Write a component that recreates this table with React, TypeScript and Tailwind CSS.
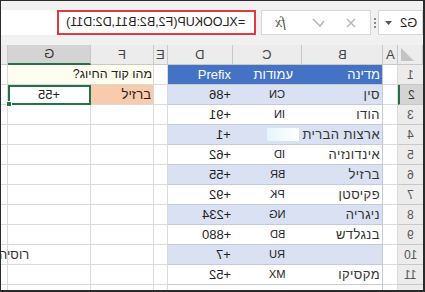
import type { ReactNode } from 'react'

// mirrored latin text (the screenshot is a flipped Excel sheet)
function M({ children, className = '' }: { children: ReactNode; className?: string }) {
  return <span className={`inline-block -scale-x-100 whitespace-nowrap ${className}`}>{children}</span>
}

const ROWS = [
  { n: '1', b: 'מדינה', c: 'עמודות', d: 'Prefix', head: true },
  { n: '2', b: 'סין', c: 'CN', d: '+86' },
  { n: '3', b: 'הודו', c: 'IN', d: '+91' },
  { n: '4', b: 'ארצות הברית', c: '', d: '+1' },
  { n: '5', b: 'אינדונזיה', c: 'ID', d: '+62' },
  { n: '6', b: 'ברזיל', c: 'BR', d: '+55' },
  { n: '7', b: 'פקיסטן', c: 'PK', d: '+92' },
  { n: '8', b: 'ניגריה', c: 'NG', d: '+234' },
  { n: '9', b: 'בנגלדש', c: 'BD', d: '+880' },
  { n: '10', b: '', c: 'RU', d: '+7' },
  { n: '11', b: 'מקסיקו', c: 'MX', d: '+52' },
]

const grid = 'border-r border-b border-[#dadada]'

function HeaderRow() {
  const cell = 'h-[20px] flex items-center justify-center border-r border-b border-[#c8c8c8] bg-[#ececec] text-[#444] text-[13px]'
  return (
    <div className="flex">
      <div className={`w-[7px] ${cell}`} />
      <div className={`w-[83px] h-[20px] flex items-center justify-center border-r border-[#c8c8c8] border-b-2 border-b-[#217346] bg-[#d4d4d4] text-[#333] text-[13px]`}>
        <M>G</M>
      </div>
      <div className={`w-[63px] ${cell}`}><M>F</M></div>
      <div className={`w-[14px] ${cell}`}><M>E</M></div>
      <div className={`w-[65px] ${cell}`}><M>D</M></div>
      <div className={`w-[69px] ${cell}`}><M>C</M></div>
      <div className={`w-[81px] ${cell}`}><M>B</M></div>
      <div className={`w-[15px] ${cell}`}><M>A</M></div>
      <div className={`w-[25px] ${cell} items-end justify-start pl-[3px] pb-[3px]`}>
        <svg width="13" height="13" viewBox="0 0 13 13">
          <polygon points="0,0 0,13 13,13" fill="#c3c3c3" />
        </svg>
      </div>
    </div>
  )
}

function DataRow({ r, i }: { r: (typeof ROWS)[number]; i: number }) {
  const band = r.head ? 'bg-[#4472c4] text-white' : i % 2 === 1 ? 'bg-[#d9e1f2] text-[#222]' : 'bg-white text-[#222]'
  const tcell = `h-[20px] flex items-center border-b border-[#c4cad6] ${band}`
  const sel = r.n === '2'
  return (
    <div className="flex text-[13px]">
      <div className={`w-[7px] h-[20px] ${grid}`} />

      {/* G */}
      {r.n === '1' ? (
        <div className="w-[83px] h-[20px] border-b border-[#dadada] bg-[#fffdf0]" />
      ) : sel ? (
        <div className="relative w-[83px] h-[20px] border-2 border-[#217346] flex items-center justify-center text-[#222]">
          <M>+55</M>
          <span className="absolute -left-[4px] -bottom-[4px] w-[6px] h-[6px] bg-[#217346] border border-white" />
        </div>
      ) : r.n === '10' ? (
        <div className={`w-[83px] h-[20px] ${grid} flex items-center`}>
          <span dir="rtl" className="-ml-[9px] whitespace-nowrap text-[#333]">רוסיה</span>
        </div>
      ) : (
        <div className={`w-[83px] h-[20px] ${grid}`} />
      )}

      {/* F */}
      {r.n === '1' ? (
        <div className="w-[63px] h-[20px] border-r border-b border-[#dadada] bg-[#fffdf0] flex items-center justify-end pr-[1px]">
          <span dir="rtl" className="whitespace-nowrap text-[#222] text-[12.5px]">מהו קוד החיוג?</span>
        </div>
      ) : sel ? (
        <div className="w-[63px] h-[20px] border-r border-b border-[#dadada] bg-[#f8cbad] flex items-center justify-end pr-[2px]">
          <span dir="rtl" className="text-[#222]">ברזיל</span>
        </div>
      ) : (
        <div className={`w-[63px] h-[20px] ${grid}`} />
      )}

      {/* E */}
      <div className={`w-[14px] h-[20px] ${grid}`} />

      {/* D C B table */}
      <div className={`w-[65px] justify-end pr-[2px] ${tcell}`}>
        {r.head ? <span>{r.d}</span> : r.d ? <M>{r.d}</M> : null}
      </div>
      <div className={`relative w-[69px] justify-end ${r.head ? 'pr-[9px]' : 'pr-[17px] text-[11px]'} ${tcell}`}>
        {r.head ? <span dir="rtl">{r.c}</span> : r.c ? <M>{r.c}</M> : null}
        {r.n === '4' && (
          <span className="absolute left-[34px] top-[3px] w-[32px] h-[13px] bg-gradient-to-r from-[#e3f6fb] to-white" />
        )}
      </div>
      <div className={`w-[81px] justify-end pr-[2px] border-r border-r-[#c4cad6] ${tcell} ${r.head ? '' : 'text-[#333] tracking-[0.4px]'}`}>
        <span dir="rtl" className="whitespace-nowrap">{r.b}</span>
      </div>

      {/* A */}
      <div className={`w-[15px] h-[20px] ${grid}`} />

      {/* row number */}
      <div
        className={`w-[25px] h-[20px] flex items-center justify-center border-b border-[#c8c8c8] text-[12px] ${
          sel ? 'bg-[#d4d4d4] border-l-2 border-l-[#217346] text-[#333]' : 'bg-[#ececec] text-[#555]'
        }`}
      >
        {r.n && <M>{r.n}</M>}
      </div>
    </div>
  )
}

export default function App() {
  return (
    <div className="w-[425px] h-[292px] overflow-hidden bg-white border-t border-l border-r-2 border-b-2 border-[#2b2b2b] font-['Liberation_Sans',Arial,sans-serif]">
      {/* formula bar */}
      <div className="h-[44px] bg-[#f1f1f1] flex items-start pt-[9px]">
        <div className="w-[255px] h-[25px] bg-white flex justify-end">
          <div className="w-[199px] h-[25px] border-2 border-[#e0393e] flex items-center justify-end pr-[9px]">
            <M className="text-[12.5px] text-[#222]">=XLOOKUP(F2,B2:B11,D2:D11)</M>
          </div>
        </div>
        <div className="ml-[5px] w-[110px] h-[25px] bg-white border border-[#d6d6d6] flex items-center">
          <M className="ml-[13px] text-[15px] italic font-['Liberation_Serif',serif] text-[#555]">fx</M>
          <svg className="ml-[26px]" width="13" height="10" viewBox="0 0 13 10">
            <polyline points="12,3 8,8 1,1" fill="none" stroke="#b5b5b5" strokeWidth="1.6" />
          </svg>
          <svg className="ml-[21px]" width="10" height="10" viewBox="0 0 10 10">
            <path d="M1 1 L9 9 M9 1 L1 9" stroke="#b5b5b5" strokeWidth="1.4" />
          </svg>
        </div>
        <div className="w-[7px] h-[25px] flex flex-col items-center justify-center gap-[2px]">
          <span className="w-[2px] h-[2px] bg-[#888]" />
          <span className="w-[2px] h-[2px] bg-[#888]" />
          <span className="w-[2px] h-[2px] bg-[#888]" />
        </div>
        <div className="flex-1 h-[25px] bg-white border border-[#d6d6d6] flex items-center">
          <svg className="ml-[6px]" width="7" height="4" viewBox="0 0 7 4">
            <polygon points="0,0 7,0 3.5,4" fill="#555" />
          </svg>
          <M className="ml-[8px] text-[13px] text-[#222]">G2</M>
        </div>
      </div>

      <HeaderRow />
      {ROWS.map((r, i) => (
        <DataRow key={r.n} r={r} i={i} />
      ))}
      <DataRow r={{ n: '', b: '', c: '', d: '' }} i={-1} />
    </div>
  )
}
